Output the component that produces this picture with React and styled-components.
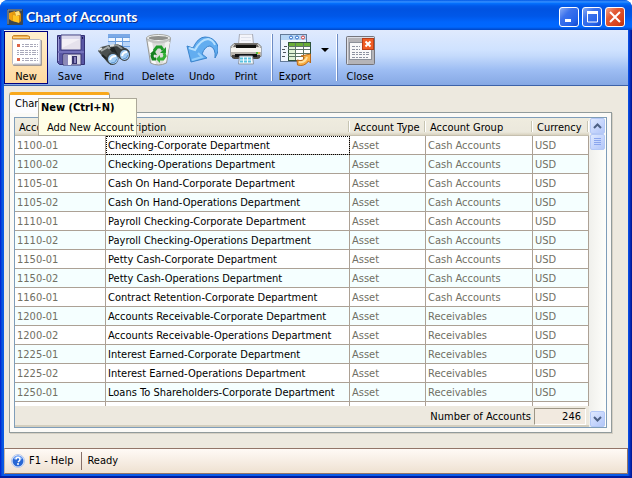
import styled, { createGlobalStyle, css } from "styled-components";

const GlobalStyle = createGlobalStyle`
* {
    box-sizing: border-box;
}
body {
    margin: 0;
    background: white;
    color: black;
    font-family: "DejaVu Sans Condensed", Tahoma, sans-serif;
    font-size: 11px;
    line-height: 14px;
}
button, input {
    font: inherit;
    color: inherit;
    margin: 0;
    padding: 0;
}
svg {
    display: block;
    flex: none;
}
`

const Window = styled.div`
display: flex;
flex-direction: column;
height: 100vh;
padding: 0 4px 4px;
overflow: hidden;
border-radius: 8px 8px 0 0;
background: linear-gradient(to right, #0019cf, #0855dd 2px, #0a5be8 4px, #0a5be8 calc(100% - 4px), #0840d8 calc(100% - 3px), #00138c);
box-shadow: inset 0 -2px 0 #001da0;
`

const TitleBar = styled.header`
display: flex;
align-items: center;
gap: 3px;
flex: none;
height: 30px;
margin: 0 -4px;
padding: 4px 7px 0;
background: linear-gradient(#0058e6 0, #3a93ff 2px, #0573ff 3px, #0059ea 6px, #0053e1 9px, #0057e8 16px, #0065fd 22px, #0068ff 27px, #0050d8 29px, #0046c4);
`

const Title = styled.h1`
flex: 1;
margin: 0;
color: white;
font-family: Lato, "Trebuchet MS", sans-serif;
font-size: 14px;
font-weight: 700;
line-height: 18px;
text-shadow: 1px 1px #0b2a86;
`

const WindowButtons = styled.div`
display: flex;
gap: 3px;
`

const WindowButton = styled.button`
display: flex;
align-items: center;
justify-content: center;
width: 20px;
height: 20px;
border: 1px solid white;
border-radius: 3px;
background: ${({ $danger }) => $danger
    ? "linear-gradient(135deg, #f0a58c, #e25a35 35%, #d8431c 75%, #b8300c)"
    : "linear-gradient(135deg, #8badf5, #3c72ec 35%, #2563ea 75%, #1144c8)"};
`

const Toolbar = styled.div`
display: flex;
align-items: stretch;
flex: none;
height: 56px;
padding: 1px 0;
border-bottom: 1px solid #3d62a8;
background: linear-gradient(#e0eafd, #cfe2ff 20px, #c4dafc 26px, #9dbdf3 40px, #86a8e4);
`

const ToolCell = styled.div`
position: relative;
display: flex;
`

const ToolButton = styled.button`
display: flex;
flex-direction: column;
align-items: center;
gap: 4px;
width: 44px;
padding: 2px 0;
border: 1px solid transparent;
background: none;
${({ $active }) => $active && css`
    border-color: #000080;
    background: linear-gradient(#fff0cf, #ffd9a0);
`}
`

const DropButton = styled.button`
width: 16px;
padding: 17px 4px;
display: flex;
border: 0;
background: none;
`

const Divider = styled.div`
width: 1px;
margin: 3px 0 3px 4px;
background: #6d8cc4;
box-shadow: -1px 0 white;
`

const Tooltip = styled.div`
position: absolute;
z-index: 2;
top: 67px;
left: 34px;
width: 99px;
height: 38px;
padding: 2px 0 2px 2px;
border: 1px solid #aca899;
background: #ffffe8;
white-space: nowrap;
`

const TooltipTitle = styled.strong`
display: block;
`

const TooltipText = styled.span`
display: block;
padding: 6px 0 0 6px;
`

const Content = styled.main`
display: flex;
flex-direction: column;
flex: 1;
min-height: 0;
padding: 6px 16px 15px 5px;
background: #ede9df;
`

const Tab = styled.button`
position: relative;
align-self: flex-start;
flex: none;
width: 101px;
height: 21px;
margin-bottom: -1px;
padding: 0 5px;
overflow: hidden;
text-align: left;
white-space: nowrap;
border: 1px solid #919b9c;
border-top: 3px solid #f8a81c;
border-bottom: 0;
border-radius: 3px 3px 0 0;
background: #fcfcfe;
`

const Panel = styled.section`
display: flex;
flex: 1;
min-height: 0;
padding: 4px;
border: 1px solid #919b9c;
background: #fbfaf7;
box-shadow: 1px 1px #d5d0c4;
`

const Grid = styled.div`
display: flex;
flex: 1;
min-width: 0;
border: 1px solid #7f9db9;
`

const GridBody = styled.div`
display: flex;
flex-direction: column;
flex: 1;
min-width: 0;
background: #ede9df;
`

const Rows = styled.div`
flex: 1;
min-height: 0;
overflow: hidden;
`

const Table = styled.table`
width: 100%;
table-layout: fixed;
border-spacing: 0;
`

const Column = styled.col`
width: ${({ $width }) => $width};
`

const HeadCell = styled.th`
position: relative;
height: 18px;
padding: 2px 0 0 4px;
overflow: hidden;
text-align: left;
font-weight: 400;
white-space: nowrap;
border-bottom: 1px solid #c5bfae;
background: linear-gradient(#efecdf, #ebe8dc 14px, #d8d2bf);

&::after {
    content: "";
    position: absolute;
    top: 3px;
    right: 0;
    width: 2px;
    height: 11px;
    background: linear-gradient(to right, #c7c5b2 50%, white 50%);
}
`

const Row = styled.tr`
background: white;
&:nth-child(even) {
    background: #f5ffff;
}
`

const Cell = styled.td`
height: 19px;
padding: 2px 2px 0;
overflow: hidden;
white-space: nowrap;
color: ${({ $dark }) => $dark ? "black" : "#716f64"};
border-right: 1px solid #aca195;
border-bottom: 1px solid #aca195;
${({ $focused }) => $focused && css`
    outline: 1px dotted black;
    outline-offset: -1px;
`}
`

const Summary = styled.div`
display: flex;
align-items: center;
justify-content: flex-end;
gap: 3px;
flex: none;
height: 21px;
padding: 2px 3px 0 0;
border-bottom: 2px solid #d3cebe;
`

const CountBox = styled.input`
width: 52px;
height: 17px;
padding: 0 4px;
text-align: right;
border: 1px solid;
border-color: #9d9686 #ffffff #ffffff #9d9686;
border-radius: 0;
background: #f2eae0;
`

const Scrollbar = styled.div`
display: flex;
flex-direction: column;
width: 17px;
padding: 0 1px;
background: linear-gradient(to right, #f0f0ec, #fefefb);
`

const ScrollButton = styled.button`
display: flex;
align-items: center;
justify-content: center;
flex: none;
width: 15px;
height: 16px;
border: 1px solid #b4c8f6;
border-radius: 2px;
background: linear-gradient(135deg, #dfe9fe, #c3d3fc 60%, #b3c7f7);
${({ $end }) => $end && css`
    margin-top: auto;
`}
`

const StatusBar = styled.footer`
display: flex;
align-items: center;
flex: none;
height: 26px;
padding: 0 6px;
border: 1px solid #927568;
border-left-color: #c9b8aa;
background: linear-gradient(#fffaf6, #f5ebe0 60%, #eee1d1);
`

const HelpLink = styled.a`
display: flex;
align-items: center;
gap: 4px;
padding-right: 8px;
color: black;
text-decoration: none;
`

const StatusText = styled.span`
height: 18px;
padding: 2px 5px;
border-left: 1px solid #86706a;
`

function AppIcon(){
    return (
        <svg width="16" height="16" viewBox="0 0 16 16">
            <rect width="16" height="16" rx="1" fill="#3b4650" />
            <path d="M1 15V1h14" fill="none" stroke="#8c99a8" />
            <path d="M2 4l3-1v9l-3-2z" fill="#f0a012" />
            <path d="M5 3l3-1v4l2 1v6l-5-1z" fill="#e39a10" />
            <path d="M6 6l6 1v7l-6-2z" fill="#ffc423" />
            <path d="M8 3l4-1 2 3v7l-2 2V7l-4-1z" fill="#d58408" />
            <path d="M8 3l4-1 1 4-4 1z" fill="#ffe27c" />
        </svg>
    )
}

function NewIcon(){
    return (
        <svg width="32" height="32" viewBox="0 0 32 32">
            <path d="M2.500 5V2.500l1-1h14l2 1V5z" fill="#f0b04b" stroke="#c9852a" />
            <path d="M3 3.500h16" stroke="#ffd68a" />
            <rect x="3" y="6" width="29" height="26" rx="1" fill="#a39b96" />
            <rect x="2.500" y="5.500" width="28" height="25" rx="1" fill="#fff" stroke="#b9bac4" />
            <path d="M4 29.500h26V7" fill="none" stroke="#dedde6" />
            <path d="M7 11.500h3M7 25.500h3" stroke="#dc6548" strokeWidth="3" />
            {[10, 12, 16, 18, 20, 24, 26].map((y) => (
                <path key={y} d={`M${y === 16 || y === 18 || y === 20 ? 7 : 12} ${y}.5h${y === 16 || y === 18 || y === 20 ? 21 : 16}`} stroke="#a9a9ba" strokeDasharray="2 1 4 1 3 1" />
            ))}
        </svg>
    )
}

function SaveIcon(){
    return (
        <svg width="32" height="32" viewBox="0 0 32 32">
            <path d="M3.500 1.500h27v29h-25l-2-2z" fill="#5957a5" stroke="#343174" />
            <path d="M4.500 3v24" stroke="#9d9bd8" />
            <path d="M7 1h20v15H7z" fill="#f3f0f6" stroke="#3b397c" />
            <path d="M8 2h18v3H8z" fill="#dcd9ec" />
            <path d="M8 14l18-9v10H8z" fill="#e6e2ec" />
            <path d="M4 17h26v2H4z" fill="#7371bb" />
            <path d="M9 20h18v11H9z" fill="#d9d8e6" stroke="#39356f" />
            <path d="M10 21h4v10h-4z" fill="#8c89b8" />
            <path d="M14 21h3v10h-3z" fill="#f5f4fa" />
            <rect x="18" y="22" width="5" height="8" fill="#37336e" />
            <rect x="20" y="23" width="2" height="6" fill="#8681bb" />
            <path d="M28.500 3v2M5.500 3v2" stroke="#1f1c50" />
        </svg>
    )
}

function FindIcon(){
    return (
        <svg width="32" height="32" viewBox="0 0 32 32">
            <rect x="10" y="0" width="22" height="23" fill="#b9d5f8" />
            <path d="M10 0h22v3H10z" fill="#7ba9e6" />
            <path d="M11 4h6v3h-6zM18 4h6v3h-6zM25 4h6v3h-6zM18 8h6v3h-6z" fill="#eff6ff" />
            <path d="M10 3.500h22M10 7.500h22M10 12.500h22M10 17.500h22M17.500 3v19M24.500 3v19" stroke="#6b9fe0" />
            <path d="M0 17l3-4 8-2 4 1 5 11-7 8-4-3z" fill="#4b504f" />
            <path d="M11 13l8-3 5 2 7 5-3 9-6-1z" fill="#393e3e" />
            <path d="M3 17l7-4 7 7" fill="none" stroke="#a5aaa9" strokeWidth="2" />
            <path d="M14 12l5-1 8 6" fill="none" stroke="#8c9291" strokeWidth="2" />
            <path d="M11 15l5-2 4 8-3 1z" fill="#202524" />
            <path d="M1 16l3-2M12 12l4-1" stroke="#dee2e1" strokeWidth="2" />
            <path d="M4 21l6 5" stroke="#1d2221" strokeWidth="2" />
            <ellipse cx="14.500" cy="24.500" rx="6" ry="6.500" fill="#3a4041" />
            <ellipse cx="15" cy="25" rx="5" ry="5" fill="#a2cdf4" />
            <ellipse cx="26.500" cy="20.500" rx="5.500" ry="6.500" fill="#3a4041" />
            <ellipse cx="26.500" cy="21" rx="4.500" ry="5" fill="#a2cdf4" />
            <path d="M12 26q1-4 6-4M24 22q1-4 5-4" fill="none" stroke="white" strokeWidth="2" />
            <path d="M13 29q4 1 6-4M25 25q4 0 5-4" fill="none" stroke="#5d92cd" />
        </svg>
    )
}

function DeleteIcon(){
    return (
        <svg width="32" height="32" viewBox="0 0 32 32">
            <path d="M4.500 4l4 25q8 4 16 0l4-25z" fill="#dcdcda" stroke="#979894" />
            <path d="M6 8l4 21 4 1-4-22z" fill="#fafaf9" />
            <path d="M23 8l-2 21 3-1 4-20z" fill="#f1f1ef" />
            <ellipse cx="16.500" cy="4" rx="12" ry="3.500" fill="#f4f4f2" stroke="#a4a5a1" />
            <ellipse cx="16.500" cy="4" rx="10" ry="2" fill="#8f908d" />
            <path d="M7 5q9 4 19 0l-1 3q-9 3-17 0z" fill="#c5c6c3" />
            <path d="M12 17l3-4h4l2 3" fill="none" stroke="#1e9a28" strokeWidth="3" />
            <path d="M24 13v6h-6z" fill="#1e9a28" />
            <path d="M22 19l1 3-2 3h-3" fill="none" stroke="#35b137" strokeWidth="3" />
            <path d="M18 21v8l-4-4z" fill="#35b137" />
            <path d="M14 25h-3l-1-3 1-3" fill="none" stroke="#168020" strokeWidth="3" />
            <path d="M8 20l4-4 3 5z" fill="#168020" />
        </svg>
    )
}

function UndoIcon(){
    return (
        <svg width="32" height="32" viewBox="0 0 32 32">
            <path d="M1 12l4 16 16-4-5-4q3-8 8-8 6 2 5 12 5-8 2-14-4-7-12-7Q12 3 7 14z" fill="#62adf0" stroke="#3a83cb" strokeLinejoin="round" />
            <path d="M3 14l6 2Q14 6 22 5q5 1 7 6" fill="none" stroke="#b6e0ff" strokeWidth="2" />
            <path d="M6 26l10-3-4-4" fill="none" stroke="#93cdfb" strokeWidth="2" />
        </svg>
    )
}

function PrintIcon(){
    return (
        <svg width="32" height="32" viewBox="0 0 32 32">
            <path d="M9.500 0h13l1 10h-15z" fill="#f4f5fb" stroke="#a8abb5" />
            <path d="M11 3.500h10M11 6.500h10" stroke="#dfe2ec" />
            <path d="M4 9.500h24l3 3v10H1v-10z" fill="#dddbd6" stroke="#77746f" />
            <path d="M5 10h22l2 3H3z" fill="#6a6764" />
            <path d="M6 11h20v3H6z" fill="#11110f" />
            <path d="M1 14h30v4H1z" fill="#f7f5f0" />
            <path d="M1 18h30v3H1z" fill="#b9b5ae" />
            <path d="M2 21h28v3l-2 1H4l-2-1z" fill="#4b4843" />
            <path d="M5 20h22v3H5z" fill="#101113" />
            <circle cx="27" cy="19" r="1" fill="#2dbb1d" />
            <circle cx="29" cy="19" r="1" fill="#f2bd2b" />
            <path d="M9.500 22h13l1 8h-15z" fill="#f3faff" stroke="#8e98a5" />
            <path d="M10 24.500h12M10 27.500h12" stroke="#5ac1df" strokeWidth="2" strokeDasharray="3 1" />
        </svg>
    )
}

function ExportIcon(){
    return (
        <svg width="32" height="32" viewBox="0 0 32 32">
            <rect x="1.500" y="0.500" width="26" height="27" fill="#f1f6fd" stroke="#637a98" />
            <path d="M2 1h25v5H2z" fill="#b6d6f6" />
            {["#2666c4", "#2666c4", "#d33939"].map((color, i) => (
                <circle key={i} cx={12 + i * 6} cy="3.500" r="1.500" fill="white" stroke={color} />
            ))}
            <path d="M5 12.500h3M3 15.500h3M4 18.500h3M3 22.500h3" stroke="#4e545b" />
            <rect x="9.500" y="8.500" width="22" height="18" fill="#fff" stroke="#30533c" />
            <path d="M10 9h21v3H10z" fill="#6aad36" />
            <path d="M10 12h7v14h-7z" fill="#e1f2d6" />
            <path d="M9 12.500h22M9 15.500h22M9 19.500h22M9 22.500h22M16.500 9v17M24.500 9v17" stroke="#5d7566" />
            <path d="M18 26q7 2 7-3l-3-1 9.500-2v9l-2-2q-4 6-11 4z" fill="#f9af45" stroke="#b8671a" />
            <path d="M20 28q6 1 8-5" fill="none" stroke="#ffe0a0" strokeWidth="2" />
        </svg>
    )
}

function CloseIcon(){
    return (
        <svg width="32" height="32" viewBox="0 0 32 32">
            <rect x="2.500" y="2.500" width="28" height="28" rx="1" fill="#b5b4b8" stroke="#75757c" />
            <path d="M3.500 30V3.500H30" fill="none" stroke="#dddfe6" />
            <rect x="5.500" y="8.500" width="22" height="17" fill="#f8f8f9" stroke="#8c9099" />
            <path d="M8 12.500h8M8 15.500h8M8 18.500h17M8 20.500h17M8 23.500h16" stroke="#8d92a0" strokeDasharray="3 1 2 1" />
            <rect x="18.500" y="4.500" width="11" height="11" fill="#f05c24" stroke="#b83d19" />
            <path d="M21.500 7.500l5 5m0-5l-5 5" stroke="white" strokeWidth="2" />
        </svg>
    )
}

function HelpIcon(){
    return (
        <svg width="14" height="14" viewBox="0 0 14 14">
            <circle cx="7" cy="7" r="6.500" fill="#f2f6ff" stroke="#b5c7ea" />
            <circle cx="7" cy="7" r="5.500" fill="#2867d4" />
            <path d="M3 5q4-5 8 0" fill="none" stroke="#87b1fa" strokeWidth="2" />
            <path d="M5 5.500q0-2 2-2t2 2q0 1-2 2.500" fill="none" stroke="white" strokeWidth="1.500" />
            <circle cx="7" cy="10" r="1" fill="white" />
        </svg>
    )
}

function Chevron({ down }){
    return (
        <svg width="9" height="6" viewBox="0 0 9 6">
            <path d={down ? "M1 1l3.500 3.500L8 1" : "M1 5l3.500-3.500L8 5"} fill="none" stroke="#4d6185" strokeWidth="2" />
        </svg>
    )
}

const TOOLS = [
    { label: "Save", Icon: SaveIcon },
    { label: "Find", Icon: FindIcon },
    { label: "Delete", Icon: DeleteIcon },
    { label: "Undo", Icon: UndoIcon },
    { label: "Print", Icon: PrintIcon },
]

const CASH = "Cash Accounts"
const RECEIVABLES = "Receivables"

const ACCOUNTS = [
    ["1100-01", "Checking-Corporate Department", CASH],
    ["1100-02", "Checking-Operations Department", CASH],
    ["1105-01", "Cash On Hand-Corporate Department", CASH],
    ["1105-02", "Cash On Hand-Operations Department", CASH],
    ["1110-01", "Payroll Checking-Corporate Department", CASH],
    ["1110-02", "Payroll Checking-Operations Department", CASH],
    ["1150-01", "Petty Cash-Corporate Department", CASH],
    ["1150-02", "Petty Cash-Operations Department", CASH],
    ["1160-01", "Contract Retention-Corporate Department", CASH],
    ["1200-01", "Accounts Receivable-Corporate Department", RECEIVABLES],
    ["1200-02", "Accounts Receivable-Operations Department", RECEIVABLES],
    ["1225-01", "Interest Earned-Corporate Department", RECEIVABLES],
    ["1225-02", "Interest Earned-Operations Department", RECEIVABLES],
    ["1250-01", "Loans To Shareholders-Corporate Department", RECEIVABLES],
]

function Tool({ label, Icon, active }){
    return (
        <ToolButton type="button" $active={active}>
            <Icon />
            <span>{label}</span>
        </ToolButton>
    )
}

function AccountsTable(){
    return (
        <Table>
            <colgroup>
                <Column $width="91px" />
                <Column $width="auto" />
                <Column $width="76px" />
                <Column $width="107px" />
                <Column $width="56px" />
            </colgroup>
            <thead>
                <tr>
                    <HeadCell>Account</HeadCell>
                    <HeadCell>Description</HeadCell>
                    <HeadCell>Account Type</HeadCell>
                    <HeadCell>Account Group</HeadCell>
                    <HeadCell>Currency</HeadCell>
                </tr>
            </thead>
            <tbody>
                {ACCOUNTS.map(([number, description, group], i) => (
                    <Row key={number}>
                        <Cell>{number}</Cell>
                        <Cell $dark $focused={i === 0}>{description}</Cell>
                        <Cell>Asset</Cell>
                        <Cell>{group}</Cell>
                        <Cell>USD</Cell>
                    </Row>
                ))}
                <Row>
                    <Cell /><Cell /><Cell /><Cell /><Cell />
                </Row>
            </tbody>
        </Table>
    )
}

export default function App(){
    return (
        <>
            <GlobalStyle />
            <Window>
                <TitleBar>
                    <AppIcon />
                    <Title>Chart of Accounts</Title>
                    <WindowButtons>
                        <WindowButton type="button" aria-label="Minimize">
                            <svg width="14" height="14"><path d="M3 10.500h6" stroke="white" strokeWidth="3" /></svg>
                        </WindowButton>
                        <WindowButton type="button" aria-label="Maximize">
                            <svg width="14" height="14"><path d="M2.500 2v10h10V2" fill="none" stroke="white" /><path d="M2 2.500h11" stroke="white" strokeWidth="3" /></svg>
                        </WindowButton>
                        <WindowButton type="button" aria-label="Close window" $danger>
                            <svg width="14" height="14"><path d="M2 2l10 10m0-10L2 12" stroke="white" strokeWidth="2" /></svg>
                        </WindowButton>
                    </WindowButtons>
                </TitleBar>
                <Toolbar>
                    <ToolCell>
                        <Tool label="New" Icon={NewIcon} active />
                        <Tooltip role="tooltip">
                            <TooltipTitle>New (Ctrl+N)</TooltipTitle>
                            <TooltipText>Add New Account</TooltipText>
                        </Tooltip>
                    </ToolCell>
                    {TOOLS.map((tool) => <Tool key={tool.label} {...tool} />)}
                    <Divider />
                    <Tool label="Export" Icon={ExportIcon} />
                    <DropButton type="button" aria-label="Export options">
                        <svg width="8" height="5"><path d="M0 0h8L4 4z" /></svg>
                    </DropButton>
                    <Divider />
                    <Tool label="Close" Icon={CloseIcon} />
                </Toolbar>
                <Content>
                    <Tab type="button">Chart of Accounts</Tab>
                    <Panel>
                        <Grid>
                            <GridBody>
                                <Rows>
                                    <AccountsTable />
                                </Rows>
                                <Summary>
                                    <label htmlFor="count">Number of Accounts</label>
                                    <CountBox id="count" readOnly value="246" />
                                </Summary>
                            </GridBody>
                            <Scrollbar>
                                <ScrollButton type="button" aria-label="Scroll up"><Chevron /></ScrollButton>
                                <ScrollButton type="button" aria-label="Scroll position">
                                    <svg width="7" height="8"><path d="M0 .5h7M0 2.500h7M0 4.500h7M0 6.500h7" stroke="#8ba6ee" /></svg>
                                </ScrollButton>
                                <ScrollButton type="button" aria-label="Scroll down" $end><Chevron down /></ScrollButton>
                            </Scrollbar>
                        </Grid>
                    </Panel>
                </Content>
                <StatusBar>
                    <HelpLink href="#help"><HelpIcon />F1 - Help</HelpLink>
                    <StatusText>Ready</StatusText>
                </StatusBar>
            </Window>
        </>
    )
}
